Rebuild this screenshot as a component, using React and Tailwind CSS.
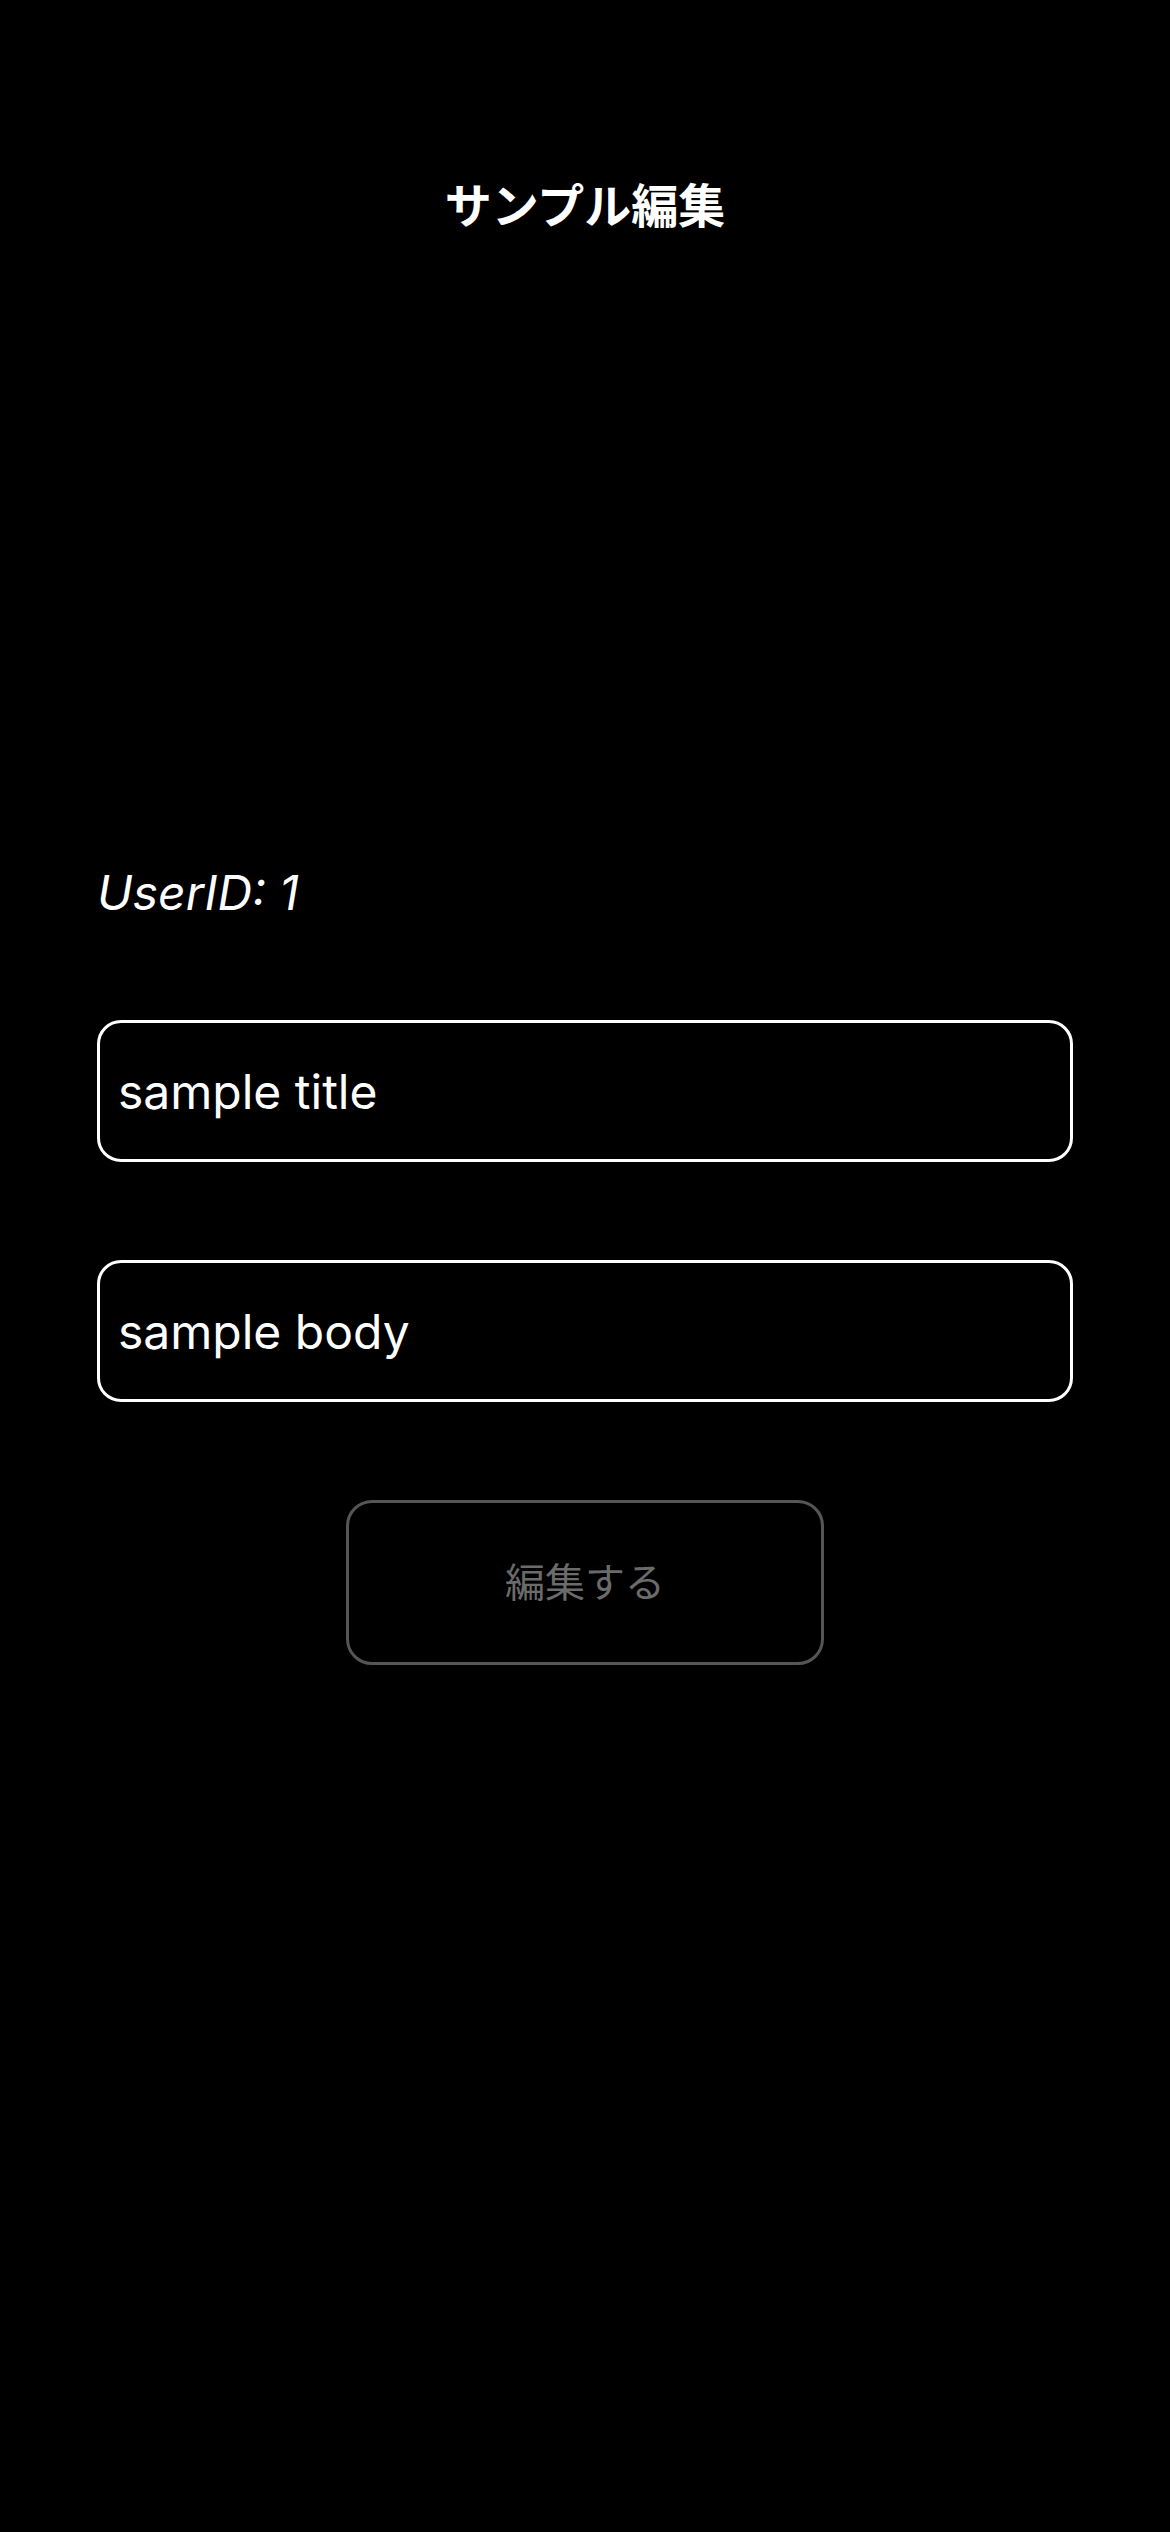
export default function App() {
  return (
    <div
      className="min-h-screen w-full bg-black text-white"
      style={{ fontFamily: "Inter, 'Noto Sans CJK JP', sans-serif" }}
    >
      <div className="pt-[176px] text-center text-[47px] font-bold leading-[60px]">
        サンプル編集
      </div>
      <div className="px-[97px]">
        <div className="mt-[628px] text-[48px] italic leading-[58px]">UserID: 1</div>
        <input
          readOnly
          defaultValue="sample title"
          className="mt-[98px] block h-[142px] w-full rounded-[24px] border-[3px] border-white bg-black pl-[18px] text-[48px] text-white outline-none"
        />
        <input
          readOnly
          defaultValue="sample body"
          className="mt-[98px] block h-[142px] w-full rounded-[24px] border-[3px] border-white bg-black pl-[18px] text-[48px] text-white outline-none"
        />
        <div className="mt-[98px] flex justify-center">
          <button
            disabled
            className="flex h-[165px] w-[478px] items-center justify-center rounded-[26px] border-[3px] border-[#555555] bg-black text-[40px] text-[#6b6b6b]"
          >
            編集する
          </button>
        </div>
      </div>
    </div>
  );
}
